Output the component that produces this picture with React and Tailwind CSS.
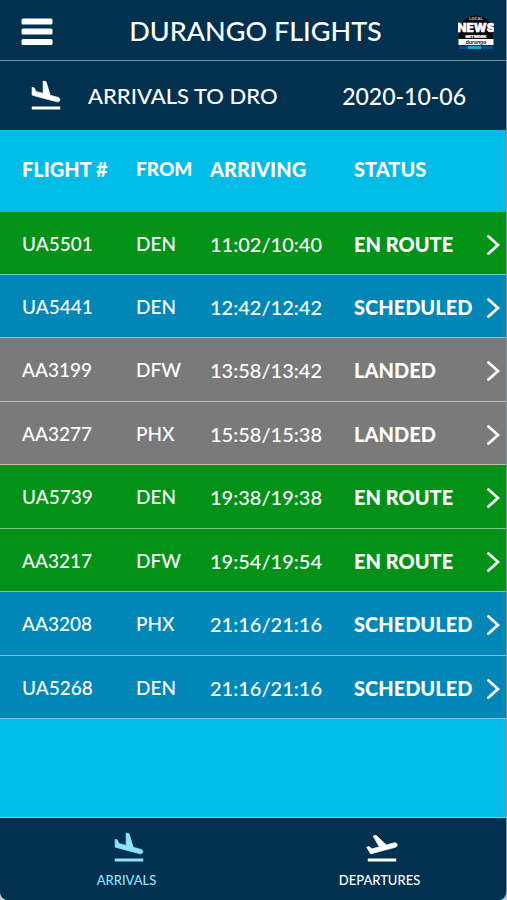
import { useState } from "react";

const flights = [
  { number: "UA5501", from: "DEN", time: "11:02/10:40", status: "EN ROUTE" },
  { number: "UA5441", from: "DEN", time: "12:42/12:42", status: "SCHEDULED" },
  { number: "AA3199", from: "DFW", time: "13:58/13:42", status: "LANDED" },
  { number: "AA3277", from: "PHX", time: "15:58/15:38", status: "LANDED" },
  { number: "UA5739", from: "DEN", time: "19:38/19:38", status: "EN ROUTE" },
  { number: "AA3217", from: "DFW", time: "19:54/19:54", status: "EN ROUTE" },
  { number: "AA3208", from: "PHX", time: "21:16/21:16", status: "SCHEDULED" },
  { number: "UA5268", from: "DEN", time: "21:16/21:16", status: "SCHEDULED" },
];

const statusColors = {
  "EN ROUTE": "bg-[#029218]",
  SCHEDULED: "bg-[#0087b8]",
  LANDED: "bg-[#7a7a7a]",
};

const MenuIcon = () => (
  <svg width="32" height="28" viewBox="0 0 32 28" fill="currentColor">
    <rect x="0.5" y="0.5" width="31" height="6" rx="1.5" />
    <rect x="0.5" y="10.5" width="31" height="6" rx="1.5" />
    <rect x="0.5" y="21" width="31" height="6" rx="1.5" />
  </svg>
);

const LandingIcon = ({ className }) => (
  <svg width="36" height="36" viewBox="0 0 24 24" fill="currentColor" className={className}>
    <path d="M2.5 19h19v2h-19z" />
    <path
      stroke="currentColor"
      strokeWidth="0.5"
      d="M9.68 13.27l4.35 1.16 5.31 1.42c.8.21 1.62-.26 1.84-1.06.21-.8-.26-1.62-1.06-1.84l-5.31-1.42-2.76-9.02L10.12 2v8.28L5.15 8.95l-.93-2.32-1.45-.39v5.17l1.6.43 5.31 1.43z"
    />
  </svg>
);

const TakeoffIcon = ({ className }) => (
  <svg width="36" height="36" viewBox="0 0 24 24" fill="currentColor" className={className}>
    <path d="M2.5 19h19v2h-19z" />
    <path
      stroke="currentColor"
      strokeWidth="0.5"
      d="M22.07 9.64c-.21-.8-1.04-1.28-1.84-1.06L14.92 10l-6.9-6.43-1.93.51 4.14 7.17-4.97 1.33-1.97-1.54-1.45.39 1.82 3.16.77 1.33 1.6-.43 5.31-1.42 4.35-1.16L21 11.49c.81-.23 1.28-1.05 1.07-1.85z"
    />
  </svg>
);

const ChevronIcon = () => (
  <svg width="14" height="22" viewBox="0 0 14 22" fill="none" stroke="currentColor" strokeWidth="2.8">
    <path d="M2.5 2.5 L12 11 L2.5 19.5" strokeLinecap="round" strokeLinejoin="miter" />
  </svg>
);

const NewsLogo = () => (
  <svg width="36" height="37" viewBox="0 0 36 37" className="shrink-0" fontFamily="Inter, sans-serif" textAnchor="middle">
    <path d="M1 27 C1 22 2 18 3 14 A15.5 14 0 0 1 33 14 C34 18 35 22 35 27 Z" fill="#05070b" />
    <text x="18" y="8" fontSize="4" fontWeight="700" fill="#c9d1d8">LOCAL</text>
    <text x="18" y="20" fontSize="12" fontWeight="900" fill="#fff" stroke="#fff" strokeWidth="0.4">NEWS</text>
    <text x="18" y="26" fontSize="4" fontWeight="900" fill="#fff" stroke="#fff" strokeWidth="0.2">NETWORK</text>
    <rect x="0.5" y="27" width="35" height="6" fill="#fff" />
    <text x="18" y="32" fontSize="5" fontWeight="700" fill="#20242a">durango</text>
    <rect x="1" y="34" width="34" height="3" fill="#0a4a94" />
    <rect x="10" y="34" width="13" height="3" fill="#04a5e5" />
  </svg>
);

const TabButton = ({ icon: Icon, label, active, onClick }) => (
  <button
    onClick={onClick}
    className={`flex flex-1 flex-col items-center pt-3 text-[13px] leading-5 ${
      active ? "text-[#8fe3fa]" : "text-white"
    }`}
  >
    <Icon className="ml-1" />
    <span className="mt-1">{label}</span>
  </button>
);

const App = () => {
  const [tab, setTab] = useState("arrivals");

  return (
    <div className="min-h-screen bg-[#c9ced6] font-[Lato,sans-serif] font-medium text-white">
      <div className="flex min-h-screen flex-col overflow-hidden rounded-b-lg border-r border-[#8297a6] bg-[#00bce6]">
        {/* Top bar */}
        <header className="flex h-[61px] items-center justify-between border-b border-[#7c93a3] bg-[#02304f] pr-3 pl-5">
          <button aria-label="Menu" className="pt-1 pl-px">
            <MenuIcon />
          </button>
          <h1 className="pt-px text-[27px] leading-8 font-medium">DURANGO FLIGHTS</h1>
          <NewsLogo />
        </header>

        {/* Airport and date */}
        <div className="flex h-[69px] items-center bg-[#02304f] pr-10 pl-7 leading-7">
          <LandingIcon />
          <h2 className="ml-6 flex-1 text-[22px] font-medium">ARRIVALS TO DRO</h2>
          <time dateTime="2020-10-06" className="text-[23px]">2020-10-06</time>
        </div>

        <main className="flex-1">
          <table className="h-[589px] w-full table-fixed text-left text-xl leading-6">
            <thead>
              <tr className="h-[82px]">
                <th className="w-[136px] pb-1 pl-[22px] font-black">FLIGHT #</th>
                <th className="w-[74px] pb-1 text-[19px] font-black">FROM</th>
                <th className="w-[144px] pb-1 font-black">ARRIVING</th>
                <th className="pb-1 font-black">STATUS</th>
                <th className="w-5"></th>
              </tr>
            </thead>
            <tbody>
              {flights.map((flight) => (
                <tr key={flight.number} className={`border-b border-white/50 ${statusColors[flight.status]}`}>
                  <td className="pt-0.5 pl-[22px] text-[19px]">{flight.number}</td>
                  <td className="pt-0.5 text-[19px]">{flight.from}</td>
                  <td className="pt-0.5">{flight.time}</td>
                  <td className="pt-0.5 font-black">{flight.status}</td>
                  <td className="pt-1">
                    <button aria-label={`Details for ${flight.number}`} className="block">
                      <ChevronIcon />
                    </button>
                  </td>
                </tr>
              ))}
            </tbody>
          </table>
        </main>

        {/* Bottom tabs */}
        <nav className="flex h-[83px] items-start border-t border-[#6fd0e8] bg-[#02304f]">
          <TabButton
            icon={LandingIcon}
            label="ARRIVALS"
            active={tab === "arrivals"}
            onClick={() => setTab("arrivals")}
          />
          <TabButton
            icon={TakeoffIcon}
            label="DEPARTURES"
            active={tab === "departures"}
            onClick={() => setTab("departures")}
          />
        </nav>
      </div>
    </div>
  );
};

export default App;
